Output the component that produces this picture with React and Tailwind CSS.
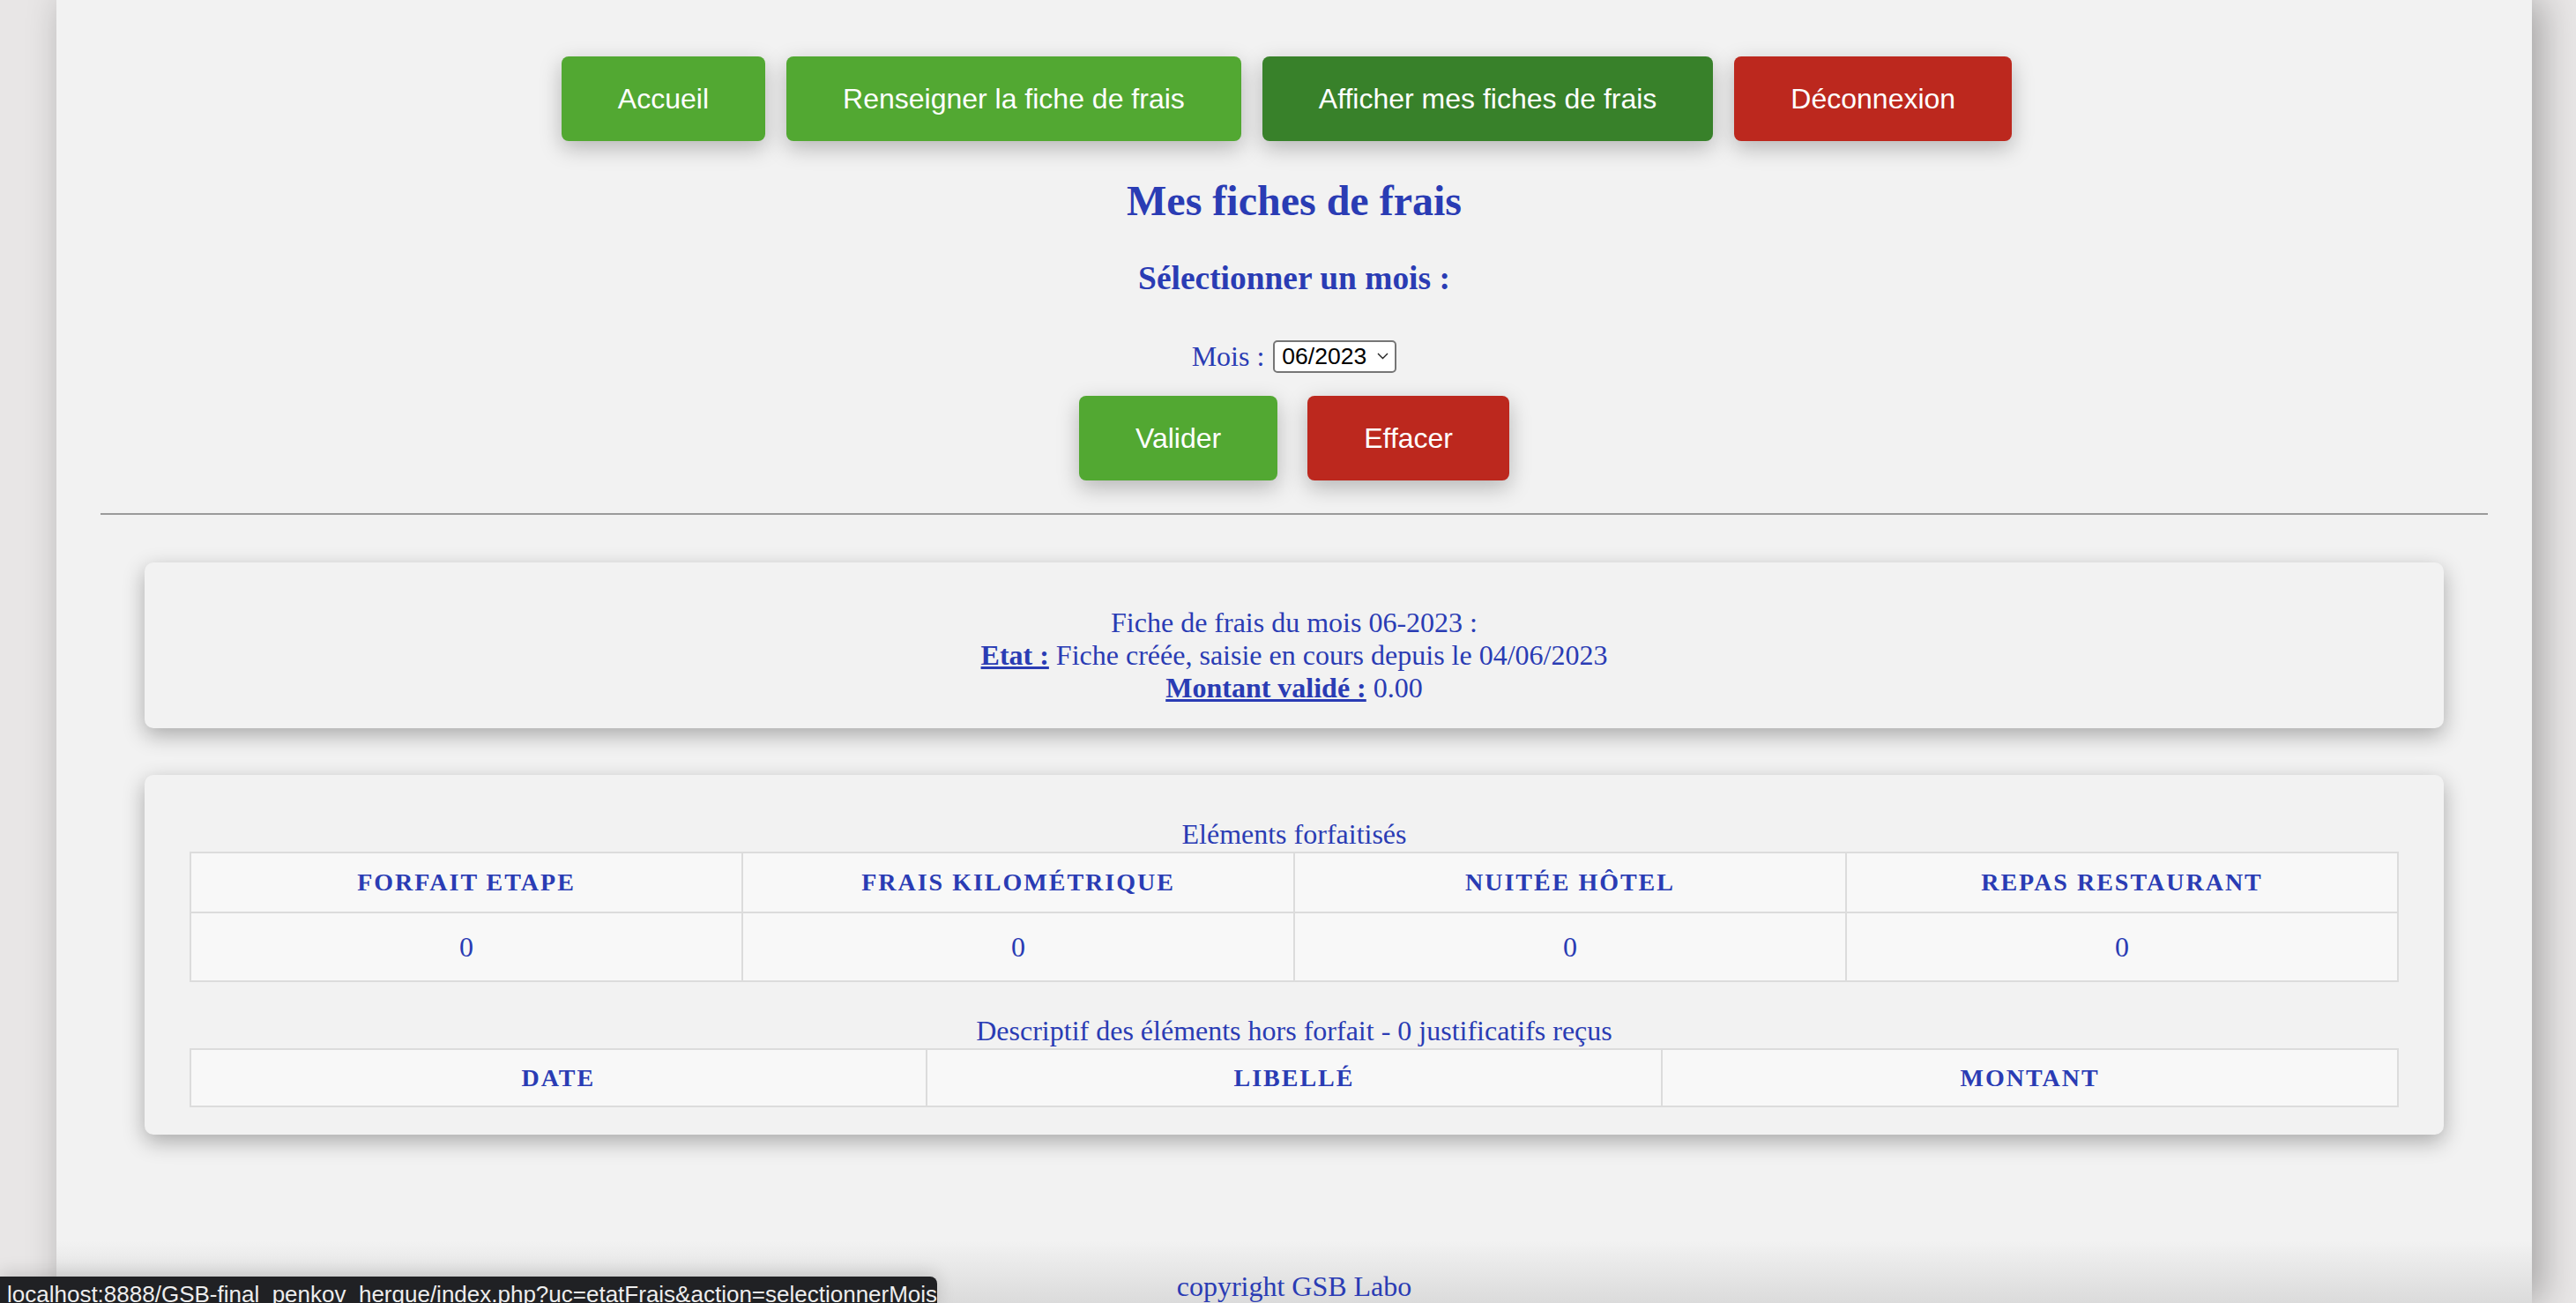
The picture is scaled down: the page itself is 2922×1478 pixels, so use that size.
import React from 'react';

const navLinks = [
  { label: 'Accueil', tone: 'bg-[#52a832]' },
  { label: 'Renseigner la fiche de frais', tone: 'bg-[#52a832]' },
  { label: 'Afficher mes fiches de frais', tone: 'bg-[#38812a]' },
  { label: 'Déconnexion', tone: 'bg-[#bc281e]' },
];

const forfaits = [
  { label: 'Forfait Etape', qty: 0 },
  { label: 'Frais Kilométrique', qty: 0 },
  { label: 'Nuitée Hôtel', qty: 0 },
  { label: 'Repas Restaurant', qty: 0 },
];

const horsForfaitCols = ['Date', 'Libellé', 'Montant'];

const Button = ({ children, tone }) => (
  <button
    className={`h-[96px] px-[64px] rounded-[8px] text-[32px] text-white font-['Liberation_Sans',Arial,sans-serif] shadow-[0_8px_24px_rgba(0,0,0,0.25)] ${tone}`}
  >
    {children}
  </button>
);

const App = () => {
  return (
    <div className="relative h-[1478px] overflow-hidden bg-[#e8e6e6] font-['Liberation_Serif','Times_New_Roman',serif] text-[#2a3cb4]">
      <div className="ml-[64px] w-[2808px] h-full bg-[#f2f2f2] px-[50px] shadow-[10px_0_40px_rgba(0,0,0,0.3)] flex flex-col">
        {/* Navigation */}
        <nav className="pt-[64px] pr-[17px] flex justify-center gap-[24px]">
          {navLinks.map((link) => (
            <Button key={link.label} tone={link.tone}>
              {link.label}
            </Button>
          ))}
        </nav>

        <h2 className="mt-[40px] text-center text-[48px] leading-[55px] font-bold">Mes fiches de frais</h2>
        <h3 className="mt-[39px] text-center text-[37.44px] leading-[43px] font-bold">Sélectionner un mois :</h3>

        <div className="mt-[48px] h-[39px] flex items-center justify-center gap-[10px]">
          <label className="text-[32px] leading-[37px]">Mois :</label>
          <div className="w-[140px] h-[37px] bg-white border-2 border-[#767676] rounded-[5px] flex items-center justify-between pl-[8px] pr-[7px] font-['Liberation_Sans',Arial,sans-serif] text-[26.5px] leading-[30px] text-black">
            <span>06/2023</span>
            <svg width="13" height="8" viewBox="0 0 13 8" fill="none">
              <polyline points="1,1 6.5,6.5 12,1" stroke="#222" strokeWidth="1.4" />
            </svg>
          </div>
        </div>

        <div className="mt-[25px] flex justify-center gap-[34px]">
          <Button tone="bg-[#52a832]">Valider</Button>
          <Button tone="bg-[#bc281e]">Effacer</Button>
        </div>

        <hr className="mt-[37px] border-0 border-t-2 border-[#9b9b9b]" />

        {/* Fiche summary */}
        <div className="mt-[54px] mx-[50px] h-[190px] pt-[50px] rounded-[10px] bg-[#f2f2f2] shadow-[0_8px_24px_rgba(0,0,0,0.3)] text-center text-[32px] leading-[37px]">
          <p>Fiche de frais du mois 06-2023 :</p>
          <p>
            <strong className="underline">Etat :</strong> Fiche créée, saisie en cours depuis le 04/06/2023
          </p>
          <p>
            <strong className="underline">Montant validé :</strong> 0.00
          </p>
        </div>

        {/* Elements */}
        <div className="mt-[53px] mx-[50px] px-[51px] pt-[49px] pb-[31px] rounded-[10px] bg-[#f2f2f2] shadow-[0_8px_24px_rgba(0,0,0,0.3)]">
          <p className="h-[38px] text-center text-[32px] leading-[37px]">Eléments forfaitisés</p>
          <div className="grid grid-cols-4 border-t-2 border-l-2 border-[#dcdcdc] bg-[#f8f8f8]">
            {forfaits.map((f) => (
              <div
                key={f.label}
                className="h-[68px] border-r-2 border-b-2 border-[#dcdcdc] flex items-center justify-center text-[28px] font-bold uppercase tracking-[2px]"
              >
                {f.label}
              </div>
            ))}
            {forfaits.map((f) => (
              <div
                key={f.label + '-qty'}
                className="h-[78px] border-r-2 border-b-2 border-[#dcdcdc] flex items-center justify-center text-[32px]"
              >
                {f.qty}
              </div>
            ))}
          </div>

          <p className="mt-[37px] h-[38px] text-center text-[32px] leading-[37px]">
            Descriptif des éléments hors forfait - 0 justificatifs reçus
          </p>
          <div className="grid grid-cols-3 border-t-2 border-l-2 border-[#dcdcdc] bg-[#f8f8f8]">
            {horsForfaitCols.map((col) => (
              <div
                key={col}
                className="h-[65px] border-r-2 border-b-2 border-[#dcdcdc] flex items-center justify-center text-[28px] font-bold uppercase tracking-[2px]"
              >
                {col}
              </div>
            ))}
          </div>
        </div>

        <footer className="-mx-[50px] mt-[120px] flex-1 pt-[34px] bg-linear-to-b from-[#f2f2f2] to-[#dbdbdb] text-center text-[32px] leading-[37px]">
          copyright GSB Labo
        </footer>
      </div>

      {/* Browser status bubble */}
      <div className="absolute left-0 top-[1448px] w-[1063px] h-[40px] pl-[8px] pt-[5px] rounded-tr-[8px] bg-[#202124] text-[#ededed] text-[26px] leading-[30px] font-['Liberation_Sans',Arial,sans-serif] whitespace-nowrap shadow-[0_-4px_20px_rgba(0,0,0,0.15)]">
        localhost:8888/GSB-final_penkov_herque/index.php?uc=etatFrais&amp;action=selectionnerMois
      </div>
    </div>
  );
};

export default App;
